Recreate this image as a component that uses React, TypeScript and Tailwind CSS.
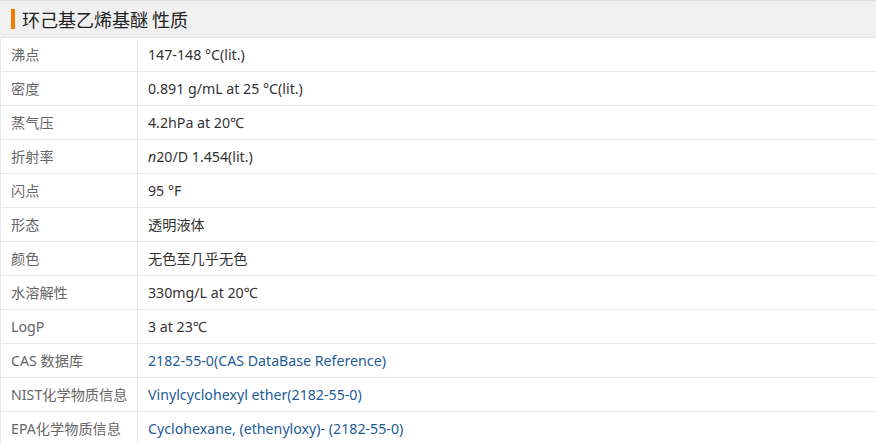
const rows: { label: string; value: React.ReactNode; link?: boolean }[] = [
  { label: "沸点", value: "147-148 °C(lit.)" },
  { label: "密度", value: "0.891 g/mL at 25 °C(lit.)" },
  { label: "蒸气压", value: "4.2hPa at 20℃" },
  {
    label: "折射率",
    value: (
      <>
        <i>n</i>20/D 1.454(lit.)
      </>
    ),
  },
  { label: "闪点", value: "95 °F" },
  { label: "形态", value: "透明液体" },
  { label: "颜色", value: "无色至几乎无色" },
  { label: "水溶解性", value: "330mg/L at 20℃" },
  { label: "LogP", value: "3 at 23℃" },
  { label: "CAS 数据库", value: "2182-55-0(CAS DataBase Reference)", link: true },
  { label: "NIST化学物质信息", value: "Vinylcyclohexyl ether(2182-55-0)", link: true },
  { label: "EPA化学物质信息", value: "Cyclohexane, (ethenyloxy)- (2182-55-0)", link: true },
];

export default function App() {
  return (
    <div
      className="w-[876px] h-[445px] overflow-hidden bg-white"
      style={{ fontFamily: '"Noto Sans", "Noto Sans CJK SC", sans-serif' }}
    >
      <div className="h-[38px] border-t border-[#dcdcdc] bg-[#f0f0f0] border-b border-b-[#e6e6e6] flex items-center pl-[11px]">
        <span className="w-[4px] h-[20px] bg-[#f07c00] mr-[7px]" />
        <h2 className="text-[18px] text-[#222]" style={{ fontFamily: '"Noto Sans CJK SC", sans-serif' }}>
          环己基乙烯基醚 性质
        </h2>
      </div>

      <div className="border-l border-[#e8e8e8]">
        {rows.map((r, i) => (
          <div key={i} className="flex h-[34px] border-b border-[#e8e8e8] text-[14.2px]">
            <div className="w-[137px] shrink-0 border-r border-[#e8e8e8] flex items-center pl-[10px] text-[#666]">
              {r.label}
            </div>
            <div className={`flex items-center pl-[10px] ${r.link ? "text-[#1d5b96]" : "text-[#333]"}`}>
              {r.value}
            </div>
          </div>
        ))}
      </div>
    </div>
  );
}
